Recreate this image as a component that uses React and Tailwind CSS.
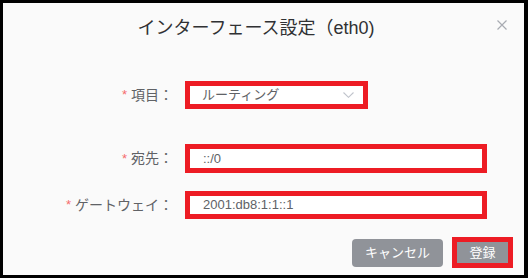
import React from "react";

const font = { fontFamily: '"Liberation Sans", "Noto Sans CJK JP", sans-serif' };

function Row({ label, children, className }) {
  return (
    <div className={"flex items-center " + className}>
      <div className="w-[170px] flex justify-end items-center text-[14px] text-[#606266]">
        <span className="text-[#f56c6c] mr-[4px] text-[13px]">*</span>
        <span>{label}：</span>
      </div>
      <div className="ml-[12px]">{children}</div>
    </div>
  );
}

export default function App() {
  return (
    <div
      className="w-[528px] h-[278px] bg-[#fafafa] border-black border-t-[3px] border-l-[3px] border-r-[4px] border-b-[3px] flex flex-col"
      style={font}
    >
      <div className="relative pt-[13px]">
        <div className="pr-[15px] text-center text-[18px] leading-[25px] text-[#303133]">
          インターフェース設定（eth0)
        </div>
        <svg
          className="absolute right-[17px] top-[17px]"
          width="10"
          height="10"
          viewBox="0 0 10 10"
          fill="none"
          stroke="#a8abb2"
          strokeWidth="1.2"
        >
          <path d="M0.5 0.5L9.5 9.5M9.5 0.5L0.5 9.5" />
        </svg>
      </div>

      <Row label="項目" className="mt-[40px] h-[28px]">
        <div className="w-[183px] h-[28px] border-[5px] border-[#ed1c24] bg-white flex items-center justify-between pl-[12px] pr-[9px] text-[13px] text-[#606266]">
          <span>ルーティング</span>
          <svg width="11" height="6" viewBox="0 0 11 6" fill="none" stroke="#c0c4cc" strokeWidth="1.1">
            <path d="M0.5 0.5L5.5 5.3L10.5 0.5" />
          </svg>
        </div>
      </Row>

      <Row label="宛先" className="mt-[35px] h-[29px]">
        <div className="w-[302px] h-[29px] border-[5px] border-[#ed1c24] bg-white flex items-center pl-[13px] text-[13px] text-[#606266]">
          ::/0
        </div>
      </Row>

      <Row label="ゲートウェイ" className="mt-[18px] h-[28px]">
        <div className="w-[302px] h-[28px] border-[5px] border-[#ed1c24] bg-white flex items-center pl-[13px] text-[13px] text-[#606266]">
          2001:db8:1:1::1
        </div>
      </Row>

      <div className="flex justify-end items-center mt-[18px] pr-[11px]">
        <button className="w-[91px] h-[28px] rounded-[4px] bg-[#909399] text-white text-[13px] flex items-center justify-center">
          キャンセル
        </button>
        <div className="ml-[9px] w-[61px] h-[31px] border-[5px] border-[#ed1c24] bg-[#909399] text-white text-[13px] flex items-center justify-center">
          登録
        </div>
      </div>
    </div>
  );
}
